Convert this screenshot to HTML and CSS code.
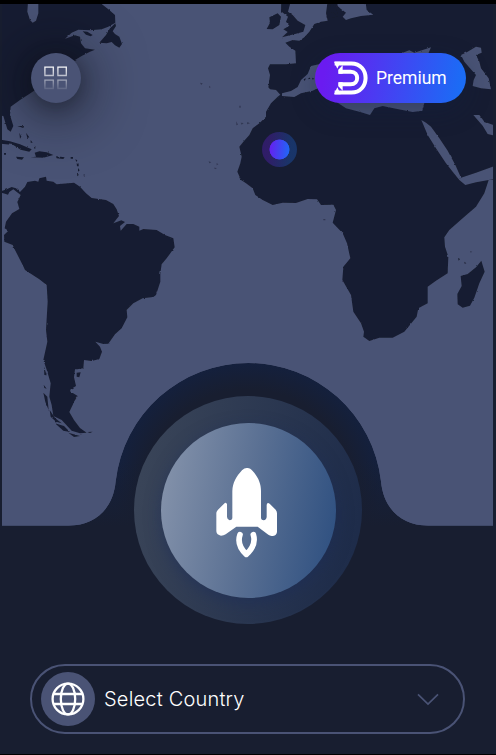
FILE: index.html
```html
<!DOCTYPE html>
<html lang="en">
<head>
<meta charset="utf-8">
<title>VPN</title>
<link rel="stylesheet" href="styles.css">
</head>
<body>
<main class="screen">
  <svg class="map" viewBox="0 12 1488 1566" aria-hidden="true">
    <defs>
      <clipPath id="frame"><path d="M6 12H1479V1577H1284C1205 1577 1150 1526 1143 1444A400.6 400.6 0 0 0 347 1444C340 1526 285 1577 206 1577H6Z"/></clipPath>
      <radialGradient id="dome" gradientUnits="userSpaceOnUse" cx="744" cy="1489" r="410">
        <stop offset=".78" stop-color="#181e30"/><stop offset=".98" stop-color="#14203d"/><stop offset="1" stop-color="#14203d"/>
      </radialGradient>
      <linearGradient id="fade" x1="0" y1="0" x2="0" y2="1">
        <stop offset=".6" stop-color="#181e30" stop-opacity="0"/><stop offset="1" stop-color="#181e30"/>
      </linearGradient>
      <filter id="coast" x="0" y="0" width="1" height="1">
        <feTurbulence type="fractalNoise" baseFrequency=".08" numOctaves="2" seed="4"/>
        <feDisplacementMap in="SourceGraphic" scale="6" xChannelSelector="R" yChannelSelector="G"/>
      </filter>
    </defs>
    <path class="dome" d="M206 1578C285 1578 340 1526 347 1444A400.6 400.6 0 0 1 1143 1444C1150 1526 1205 1578 1284 1578Z"/>
    <path class="dome-fade" d="M206 1578C285 1578 340 1526 347 1444A400.6 400.6 0 0 1 1143 1444C1150 1526 1205 1578 1284 1578Z"/>
    <g clip-path="url(#frame)">
      <path class="sea" d="M6 12H1479V1578H6Z"/>
      <g filter="url(#coast)">
        <path class="sea" d="M-30 -20H1520V1640H-30Z"/>
        <g class="land">
          <path d="M-20 -10H85L82 35L90 60L98 68L108 62L115 40V-10H300L305 12L325 28L345 45L346 68L325 80L305 88L270 91L235 89L215 98L195 116L225 106L240 110L243 130L255 145L285 149L270 155L245 168L225 180L215 190L180 220L98 275L60 300L32 320L30 345L40 378L32 395L22 388L10 348L-20 345Z"/>
          <path d="M346 70L330 85L318 105L298 128L320 130L335 126L345 136L358 143L366 132L358 110L345 102L338 94L348 78Z"/>
          <path d="M248 94L262 95L278 105L272 109L258 104Z"/>
          <path d="M-5 418L30 424L60 433L95 448L88 455L62 449L40 435L-5 430Z"/>
          <path d="M92 472L108 470L104 458L118 454L140 457L160 465L130 473ZM48 470L72 472L66 479L52 477ZM168 469L194 472L190 477L170 475Z"/>
          <path d="M52 378L72 378L70 384ZM58 398L64 410L60 416ZM78 398L88 412L82 414ZM92 420L98 428L92 428ZM102 440L108 444L103 446ZM12 459h6v5h-6zM212 471h7v5h-7zM226 478l6 3-3 5zM230 490l6 3v6h-5zM234 504l5 7-5 4zM231 521l6 3-5 5zM251 523l6 3-5 4z"/>
          <path class="faint" d="M600 248l8 2-4 5zM628 257l4 5-5 1zM626 484l8 3-6 3zM650 489l5 4-5 3zM642 503l9 1-6 4zM718 317h4v6h-4zM709 364l5 10-5 2zM722 368l9 1-6 5zM742 366l8 4-9 3z"/>
          <path d="M5 573L20 568L35 561L48 565L60 576L75 560L82 546L105 542L115 545L118 535L138 530L140 542L160 545L170 553L205 550L222 548L240 560L258 580L275 594L318 600L340 612L350 628L357 648L340 670L364 661L375 666L360 678L362 692L380 672L400 672L418 680L418 692L430 687L470 690L495 705L520 715L524 742L500 775L485 793L481 820L481 845L468 885L460 891L428 895L400 910L380 930L382 952L365 985L345 1003L325 1031L310 1032L286 1025L300 1040L306 1055L298 1077L275 1083L252 1080L250 1105L232 1108L225 1108L222 1132L228 1158L212 1168L210 1174L233 1188L222 1205L218 1215L208 1236L222 1260L240 1284L260 1298L240 1300L215 1292L185 1260L160 1248L155 1215L148 1190L152 1150L142 1115L130 1080L142 1025L138 990L143 905L140 855L118 838L75 810L68 795L45 750L38 735L13 725L12 705L25 692L14 685L18 665L36 640L58 627L52 606L62 585L40 568L28 576L24 584L5 578Z"/>
          <path d="M132 1100L140 1126L133 1125ZM131 1154L140 1166L133 1164ZM130 1178L142 1190L146 1230L136 1206ZM149 1230L165 1254L185 1270L168 1265L152 1250ZM165 1270L192 1278L210 1296L190 1292ZM205 1298L240 1308L222 1311ZM230 1118L242 1117L238 1132L230 1130ZM262 1296l16-1-8 4z"/>
          <g transform="translate(738)">
            <path d="M770 -20H355L362 30L382 44L345 48L315 55L300 60L290 50L300 38L285 27L275 18L270 -20H248L240 40L245 62L225 65L205 72L190 95L175 112L160 122L140 120L118 128L130 140L148 152L150 190L120 193L72 193L66 205L72 225L67 262L72 268L90 270L103 284L95 290L75 310L60 335L60 350L40 370L20 385L10 405L-8 425L-20 440L-13 470L-17 490L-26 515L-15 540L0 550L20 565L28 585L50 600L80 615L110 608L150 609L185 597L213 598L225 615L262 614L270 630L260 668L290 700L303 730L313 775L292 800L289 840L315 885L322 935L345 970L354 995L352 1010L370 1023L400 1013L440 1013L475 995L512 950L517 925L545 910L545 860L570 842L605 820L607 770L597 740L595 712L610 690L650 655L690 620L715 580L728 540H770Z"/>
            <path d="M106 -10H138L130 20L126 35L140 45L155 62L178 75L172 95L150 101L108 112L125 96L112 88L130 77L120 65L126 50L105 34ZM70 52L95 40L105 50L100 75L80 88L62 87L72 68Z"/>
            <path d="M706 782L716 815L700 850L685 893L672 917L650 923L635 913L634 882L647 858L644 828L665 822L690 802Z"/>
            <path d="M254 15L268 20L278 48L260 53L270 42L256 36ZM636 774l6 3-4 5zM655 785l6 5-5 1z"/>
            <path class="faint" d="M672 753l7 2-5 3zM232 657h6v4h-6z"/>
          </g>
        </g>
        <g class="sea" transform="translate(738)">
          <path d="M108 280L135 273L155 261L165 240L185 222L195 198L222 192L300 200L500 250L535 309L528 332L500 336L450 326L410 318L385 325L372 345L340 335L300 325L275 308L220 262L200 272L165 280L145 291L108 288Z"/>
          <path d="M470 158L490 151L505 158L555 142L545 165H470ZM645 165L665 155L690 140L705 143L707 158L690 165L700 185L705 205L728 235L735 268L705 265L680 258L683 240L690 225L672 205L655 185Z"/>
          <path d="M526 360L540 368L555 380L580 415L605 452L628 495L645 533L690 518L770 490V535L728 540L690 547L658 555L640 540L620 515L600 490L570 445L545 405ZM682 345L700 345L715 365L770 385V412L725 402L710 377Z"/>
          <path d="M255 614l8 2-3 12-8-2z"/>
        </g>
        <path class="land" d="M911 238l7-3-4 8zM924 236l8-5-3 8zM936 233l7 3-5 3z"/>
      </g>
    </g>
  </svg>

  <header class="bar">
    <button class="menu" aria-label="Menu">
      <svg width="26" height="26" viewBox="0 0 26 26">
        <defs><linearGradient id="tile" gradientUnits="userSpaceOnUse" x1="0" y1="1" x2="0" y2="25"><stop stop-color="#fff"/><stop offset="1" stop-color="#fff" stop-opacity=".08"/></linearGradient></defs>
        <path d="M1.9 2.1h8.4v8.4H1.9zM14.9 2.1h8.4v8.4h-8.4zM1.9 15.1h8.4v8.4H1.9zM14.9 15.1h8.4v8.4h-8.4z" fill="none" stroke="url(#tile)" stroke-width="1.3"/>
      </svg>
    </button>
    <button class="premium">
      <svg width="34" height="34" viewBox="0 0 102 102">
        <g fill="none" stroke="#fff">
          <path d="M2 7.500H52C109 7.500 109 94.500 52 94.500H2" stroke-width="12"/>
          <path d="M14 32H50C76 32 76 70 50 70H14" stroke-width="12"/>
        </g>
        <path d="M0 2H20L10 23ZM13 26L26 13V38H13ZM0 100H20L10 79ZM13 76L26 89V64H13Z" fill="#fff"/>
      </svg>
      <span>Premium</span>
    </button>
  </header>
  <i class="pin"></i>

  <button class="dial" aria-label="Connect">
    <span class="core">
      <svg class="rocket" width="64" height="92" viewBox="0 0 192 276">
        <g fill="#fff">
          <path d="M97 3C104 3 108 7 113 12C130 31 138 50 138 72V154Q139 160 146 160Q154 159 155 150V114Q156 105 164 110L182 128Q186 133 186 139V195Q184 208 170 207Q164 206 160 203L128 179H64L32 202Q26 206 18 206Q5 204 4 193V137Q5 132 9 128L27 110Q34 104 36 112V150Q37 159 44 160Q51 160 52 154V72C53 48 63 29 81 10Q89 2 97 3Z"/>
        </g>
        <path d="M75 203C67 226 76 245 94 262C113 245 122 226 115 203" fill="none" stroke="#fff" stroke-width="17" stroke-linecap="round" stroke-linejoin="round"/>
      </svg>
    </span>
  </button>

  <button class="select">
    <span class="globe">
      <svg width="34" height="34" viewBox="0 0 34 34" fill="none" stroke="#fff" stroke-width="2.3">
        <circle cx="17" cy="17" r="15.4"/><ellipse cx="17" cy="17" rx="7.2" ry="15.4"/><path d="M2.5 12H31.5M2.5 22H31.5"/><path d="M10 12V22M24 12V22" stroke-width="1"/>
      </svg>
    </span>
    <span class="label">Select Country</span>
    <svg class="chevron" width="22" height="13" viewBox="0 0 22 13"><path d="M1 1.4L11 11L21 1.4" fill="none" stroke="#4a5375" stroke-width="1.7"/></svg>
  </button>
</main>
</body>
</html>
```

FILE: styles.css
```css
* { box-sizing: border-box; }
body { margin: 0; background: #000; overflow: hidden; }
button { border: 0; padding: 0; color: #fff; }
.screen {
  position: relative;
  display: flex;
  flex-direction: column;
  width: 496px;
  height: 750px;
  margin: 4px 0 1px;
  padding: 49px 30px 0 31px;
  background: #181e30;
  overflow: hidden;
}
.map { position: absolute; top: 0; left: 0; width: 496px; height: 522px; }
.land { fill: #181e30; }
.sea { fill: #4a5375; }
.faint { opacity: .5; }
.dome { fill: url(#dome); }
.dome-fade { fill: url(#fade); }
.bar { position: relative; display: flex; justify-content: space-between; }
.menu {
  display: grid;
  place-items: center;
  width: 50px;
  height: 50px;
  border-radius: 50%;
  background: #4a5375;
  box-shadow: 0 6px 55px 8px rgba(10, 12, 18, .65), 0 4px 18px rgba(16, 20, 30, .35);
}
.premium {
  display: flex;
  align-items: center;
  gap: 8px;
  width: 151px;
  height: 50px;
  padding-left: 19px;
  border-radius: 25px;
  background: linear-gradient(100deg, #6a1bf0 8%, #1b6cf5 95%);
  box-shadow: 0 8px 24px rgba(18, 32, 66, .35);
  font: 400 17.5px Roboto, sans-serif;
}
.pin {
  position: absolute;
  left: 262px;
  top: 128px;
  width: 35px;
  height: 35px;
  border-radius: 50%;
  background:
    radial-gradient(circle, transparent 9.7px, #181e30b5 10.3px),
    linear-gradient(95deg, #6a1bf0 20%, #1b6cf5 80%);
}
.dial {
  display: grid;
  place-items: center;
  align-self: center;
  width: 228px;
  height: 228px;
  margin: 293px 1px 0 0;
  border-radius: 50%;
  background: linear-gradient(100deg, #394458 8%, #1e2c4a 92%);
  z-index: 1;
}
.core {
  display: grid;
  place-items: center;
  width: 175px;
  height: 175px;
  border-radius: 50%;
  background: linear-gradient(100deg, #8593ab 3%, #5a7093 50%, #2d4f80 98%);
  box-shadow: 0 5px 16px rgba(25, 44, 92, .5);
}
.rocket { margin: 6px 2px 0 0; }
.select {
  display: flex;
  align-items: center;
  width: 435px;
  height: 70px;
  margin: 40px 0 0 -1px;
  padding: 0 24px 0 9px;
  border: 2px solid #4a5375;
  border-radius: 35px;
  background: none;
}
.globe {
  display: grid;
  place-items: center;
  width: 54px;
  height: 54px;
  border-radius: 50%;
  background: #4a5375;
}
.label { margin-left: 9px; font: 300 20px Inter, sans-serif; letter-spacing: .2px; }
.chevron { margin-left: auto; }
```
